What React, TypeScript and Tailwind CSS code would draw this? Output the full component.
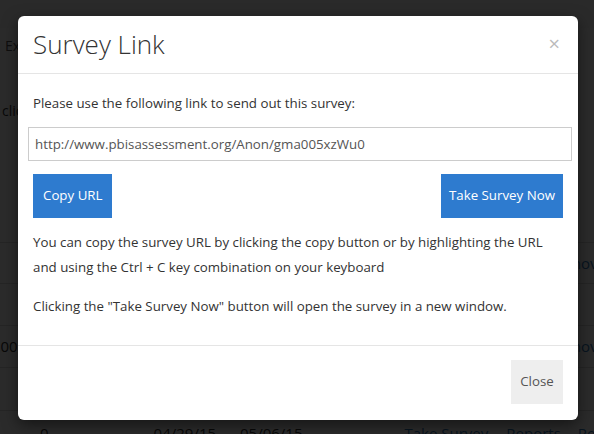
import React from "react";

export default function App() {
  return (
    <div className="relative w-[594px] h-[434px] overflow-hidden bg-white font-['Open_Sans',sans-serif] text-[13.3px] text-[#333]">
      {/* underlying page */}
      <div className="flex flex-col">
        <div className="h-[28px] bg-[#f5f5f5]" />
        <div className="h-[34px] pl-[5px] flex items-center">
          <span className="text-[#555] text-[14px]">Export</span>
        </div>
        <div className="h-[58px] pl-[2px] flex items-center pt-[38px]">
          <span className="text-[14px] whitespace-nowrap">click here to view</span>
        </div>
        <div className="h-[122px]" />
        <div className="h-[41px] border-t border-[#ddd] flex items-center justify-end">
          <span className="text-[#337ab7] text-[15px] -mr-[12px]">Remove</span>
        </div>
        <div className="h-[42px] border-t border-[#ddd]" />
        <div className="h-[42px] border-t border-[#ddd] flex items-center justify-between">
          <span className="-ml-[12px] text-[15px]">1.00</span>
          <span className="text-[#337ab7] text-[15px] -mr-[12px]">Remove</span>
        </div>
        <div className="h-[43px] border-t border-[#ddd]" />
        <div className="h-[42px] border-t border-[#ddd] flex items-center text-[15px] pt-[4px] whitespace-nowrap">
          <span className="ml-[40px] shrink-0">0</span>
          <span className="ml-[105px] shrink-0">04/29/15</span>
          <span className="ml-[24px] shrink-0">05/06/15</span>
          <span className="ml-[102px] shrink-0 text-[#337ab7]">Take Survey</span>
          <span className="ml-[18px] shrink-0 text-[#337ab7]">Reports</span>
          <span className="ml-[17px] shrink-0 text-[#337ab7]">Remove</span>
        </div>
      </div>

      {/* backdrop */}
      <div className="absolute inset-0 bg-black/[0.83]" />

      {/* modal */}
      <div className="absolute left-[18px] top-[16px] w-[560px] h-[404px] bg-white rounded-[6px] shadow-[0_5px_15px_rgba(0,0,0,0.5)] flex flex-col">
        <div className="h-[58px] border-b border-[#e5e5e5] px-[15px] flex items-center justify-between">
          <h4 className="text-[26px] font-light text-[#333] leading-none -mt-[2px]">Survey Link</h4>
          <span className="text-[20px] font-normal leading-none text-[#bbb] mr-[3px] -mt-[2px]">×</span>
        </div>
        <div className="h-[271px] px-[15px] pt-[19px] flex flex-col">
          <p className="leading-[20px]">Please use the following link to send out this survey:</p>
          <input
            readOnly
            value="http://www.pbisassessment.org/Anon/gma005xzWu0"
            className="mt-[14px] -ml-[5px] w-[544px] h-[34px] border border-[#ccc] px-[6px] text-[13.3px] text-[#555] outline-none"
          />
          <div className="mt-[13px] flex justify-between">
            <button className="h-[44px] px-[10px] bg-[#2e7bcf] text-white text-[13.3px]">Copy URL</button>
            <button className="h-[44px] px-[8px] bg-[#2e7bcf] text-white text-[13.3px]">Take Survey Now</button>
          </div>
          <p className="mt-[12px] leading-[25px]">
            You can copy the survey URL by clicking the copy button or by highlighting the URL and using the Ctrl + C key combination on your keyboard
          </p>
          <p className="mt-[14px] leading-[25px]">
            Clicking the "Take Survey Now" button will open the survey in a new window.
          </p>
        </div>
        <div className="flex-1 border-t border-[#e5e5e5] px-[15px] pt-[14px] flex justify-end">
          <button className="h-[44px] w-[52px] bg-[#eee] text-[#555] text-[13.3px]">Close</button>
        </div>
      </div>
    </div>
  );
}
